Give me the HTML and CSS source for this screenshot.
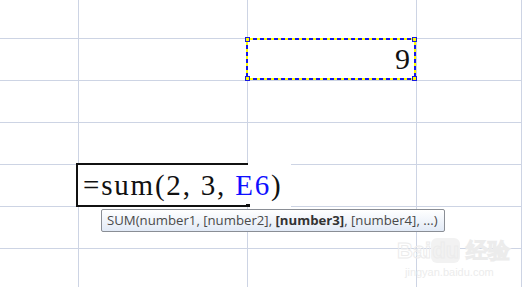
FILE: index.html
```html
<!DOCTYPE html>
<html lang="en">
<head>
    <meta charset="UTF-8">
    <title>Sheet</title>
    <link rel="stylesheet" href="styles.css">
</head>
<body>
    <div id="sheet">
        <div class="cell"></div><div class="cell"></div><div class="cell"></div><div class="cell"></div>
        <div class="cell"></div><div class="cell"></div>
        <div class="cell selected">
            <div class="marquee">
                <span class="value">9</span>
                <i class="handle tl"></i><i class="handle tr"></i>
                <i class="handle bl"></i><i class="handle br"></i>
            </div>
        </div>
        <div class="cell"></div>
        <div class="cell"></div><div class="cell"></div><div class="cell"></div><div class="cell"></div>
        <div class="cell"></div><div class="cell"></div><div class="cell"></div><div class="cell"></div>
        <div class="cell"></div>
        <div class="cell editing">
            <div class="editor">
                <div class="editor-frame"></div>
                <span class="formula">=sum(2, 3, <span class="ref">E6</span>)</span>
                <i class="fill-handle"></i>
            </div>
            <div class="tooltip">SUM(number1, [number2], <b>[number3]</b>, [number4], ...)</div>
        </div>
        <div class="cell"></div><div class="cell"></div>
        <div class="cell"></div><div class="cell"></div><div class="cell"></div><div class="cell"></div>
        <div class="cell"></div><div class="cell"></div><div class="cell"></div>
        <div class="cell">
            <div class="watermark">
                <div class="wm-logo">Bai<span class="paw">du</span> 经验</div>
                <div class="wm-url">jingyan.baidu.com</div>
            </div>
        </div>
    </div>
</body>
</html>
```

FILE: styles.css
```css
body {
    margin: 0;
    background: #fff;
    overflow: hidden;
}

#sheet {
    display: grid;
    grid-template-columns: 79px 169px 169px 1fr;
    grid-template-rows: 39px 42px 42px 42px 42px 42px 39px;
    width: 522px;
    height: 287px;
}

.cell {
    position: relative;
    border-right: 1px solid #cdd4e4;
    border-bottom: 1px solid #cdd4e4;
}

/* copied cell with marching ants */
.marquee {
    position: absolute;
    left: -2px;
    top: -1px;
    width: 166px;
    height: 38px;
    border: 2px solid transparent;
    background:
        repeating-linear-gradient(90deg, #1717e6 0 4px, #ffff00 4px 7px) top left / 100% 2px no-repeat border-box,
        repeating-linear-gradient(90deg, #1717e6 0 4px, #ffff00 4px 7px) bottom left / 100% 2px no-repeat border-box,
        repeating-linear-gradient(180deg, #1717e6 0 4px, #ffff00 4px 7px) top left / 2px 100% no-repeat border-box,
        repeating-linear-gradient(180deg, #1717e6 0 4px, #ffff00 4px 7px) top right / 2px 100% no-repeat border-box,
        #fff;
    z-index: 2;
    display: flex;
    align-items: center;
    justify-content: flex-end;
}

.value {
    font-family: "Liberation Serif", serif;
    font-size: 30px;
    color: #111;
    padding-right: 4px;
    line-height: 1;
}

.handle {
    position: absolute;
    width: 3px;
    height: 3px;
    background: #ffff00;
    border: 1px solid #1a1ae0;
}

.tl { left: -3px; top: -3px; }
.tr { right: -3px; top: -3px; }
.bl { left: -3px; bottom: -3px; }
.br { right: -3px; bottom: -3px; }

/* in-cell formula editor */
.editor {
    position: absolute;
    left: -3px;
    top: -2px;
    width: 215px;
    height: 44px;
    background: #fff;
    z-index: 2;
}

.editor-frame {
    position: absolute;
    left: 0;
    top: 0;
    width: 170px;
    height: 40px;
    border: 2px solid #111;
    border-right: none;
}

.formula {
    position: absolute;
    left: 7px;
    top: 7px;
    font-family: "Liberation Serif", serif;
    font-size: 29px;
    letter-spacing: 1.8px;
    color: #111;
    line-height: 30px;
    white-space: nowrap;
}

.ref {
    color: #1010ff;
}

.fill-handle {
    position: absolute;
    left: 170px;
    top: 41px;
    width: 4px;
    height: 3px;
    background: #111;
}

.tooltip {
    position: absolute;
    left: 22px;
    top: 44px;
    height: 21px;
    padding: 0 6px 0 5px;
    border: 1px solid #8a8e95;
    border-radius: 2px;
    background: linear-gradient(#ffffff, #e2eaf6);
    font-family: "Open Sans", sans-serif;
    font-size: 13.2px;
    line-height: 20px;
    color: #4a4a4a;
    white-space: nowrap;
    z-index: 3;
}

.tooltip b {
    color: #333;
}

/* faint watermark */
.watermark {
    position: absolute;
    left: -20px;
    top: -13px;
    color: transparent;
    -webkit-text-stroke: 1px #ececec;
    font-family: "Liberation Sans", sans-serif;
}

.wm-logo {
    font-size: 22px;
    font-weight: bold;
    white-space: nowrap;
}

.paw {
    background: #f2f2f2;
    border-radius: 6px;
    padding: 0 1px;
}

.wm-url {
    font-size: 11px;
    -webkit-text-stroke: 0;
    color: #ececec;
    margin-left: 8px;
}
```
